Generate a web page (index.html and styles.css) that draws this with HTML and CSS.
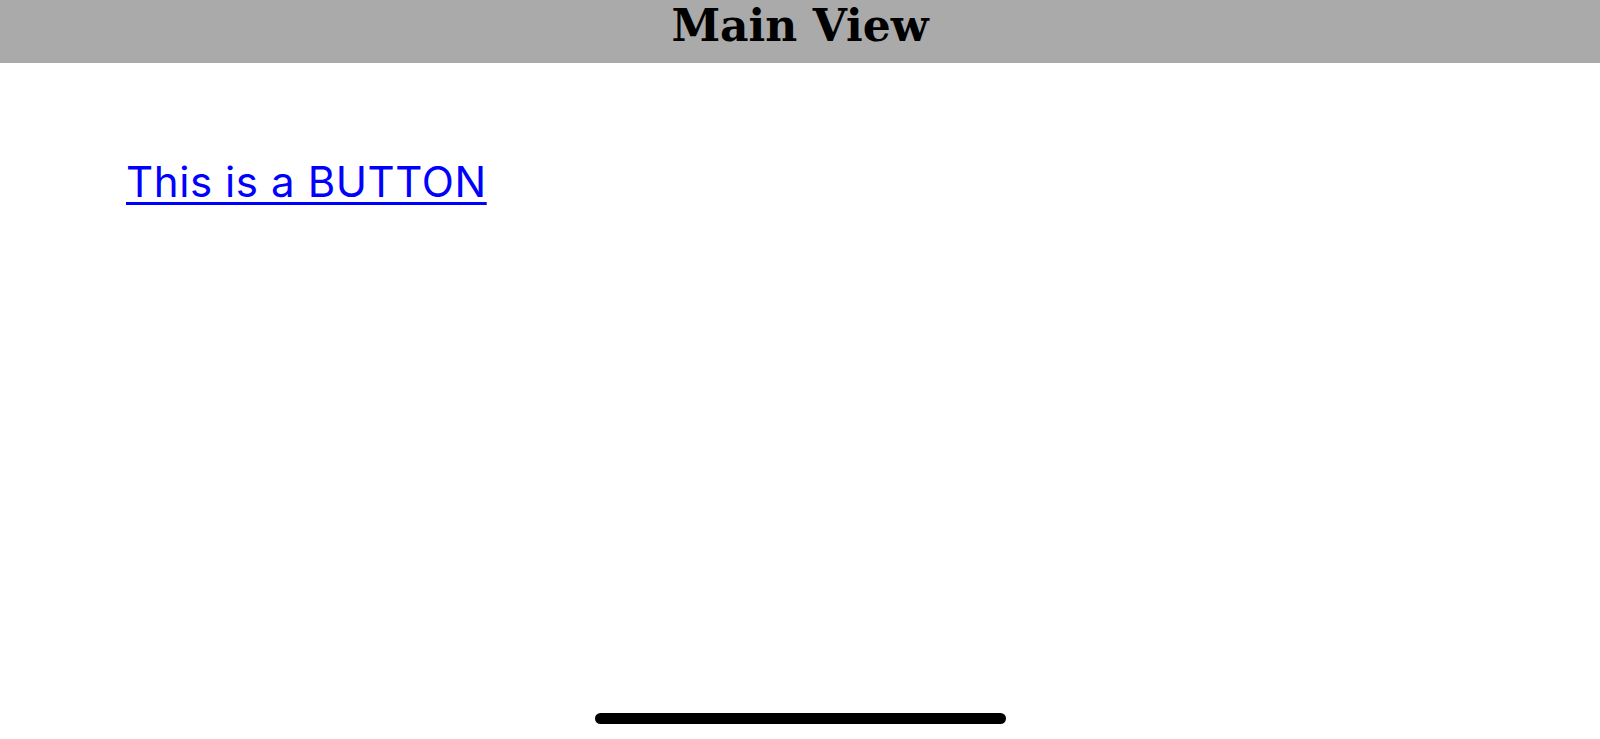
FILE: index.html
```html
<!DOCTYPE html>
<html>
<head>
<meta charset="utf-8">
<title>Main View</title>
<link rel="stylesheet" href="styles.css">
</head>
<body>
<div class="screen">
  <header class="navbar">
    <h1 class="nav-title">Main View</h1>
  </header>
  <main class="content">
    <a class="link-button" href="#">This is a BUTTON</a>
  </main>
  <div class="home-area">
    <div class="home-indicator"></div>
  </div>
</div>
</body>
</html>
```
FILE: styles.css
```css
html, body {
  margin: 0;
  padding: 0;
  background: #ffffff;
}
.screen {
  width: 1600px;
  height: 739px;
  display: flex;
  flex-direction: column;
  overflow: hidden;
}
.navbar {
  height: 63px;
  box-sizing: border-box;
  padding-top: 4px;
  background: #aaaaaa;
  display: flex;
  align-items: flex-start;
  justify-content: center;
  flex-shrink: 0;
}
.nav-title {
  margin: 0;
  font-family: "DejaVu Serif", serif;
  font-weight: bold;
  font-size: 44px;
  line-height: 44px;
  color: #000000;
}
.content {
  flex: 1;
  padding: 94px 0 0 126px;
}
.link-button {
  font-family: Inter, "Noto Sans", sans-serif;
  font-size: 42px;
  line-height: 50px;
  letter-spacing: 0.6px;
  color: #0000ff;
  text-decoration: underline;
  text-decoration-thickness: 3px;
  text-underline-offset: 5px;
}
.home-area {
  height: 26px;
  display: flex;
  justify-content: center;
  flex-shrink: 0;
}
.home-indicator {
  width: 411px;
  height: 11px;
  background: #000000;
  border-radius: 6px;
}
```
